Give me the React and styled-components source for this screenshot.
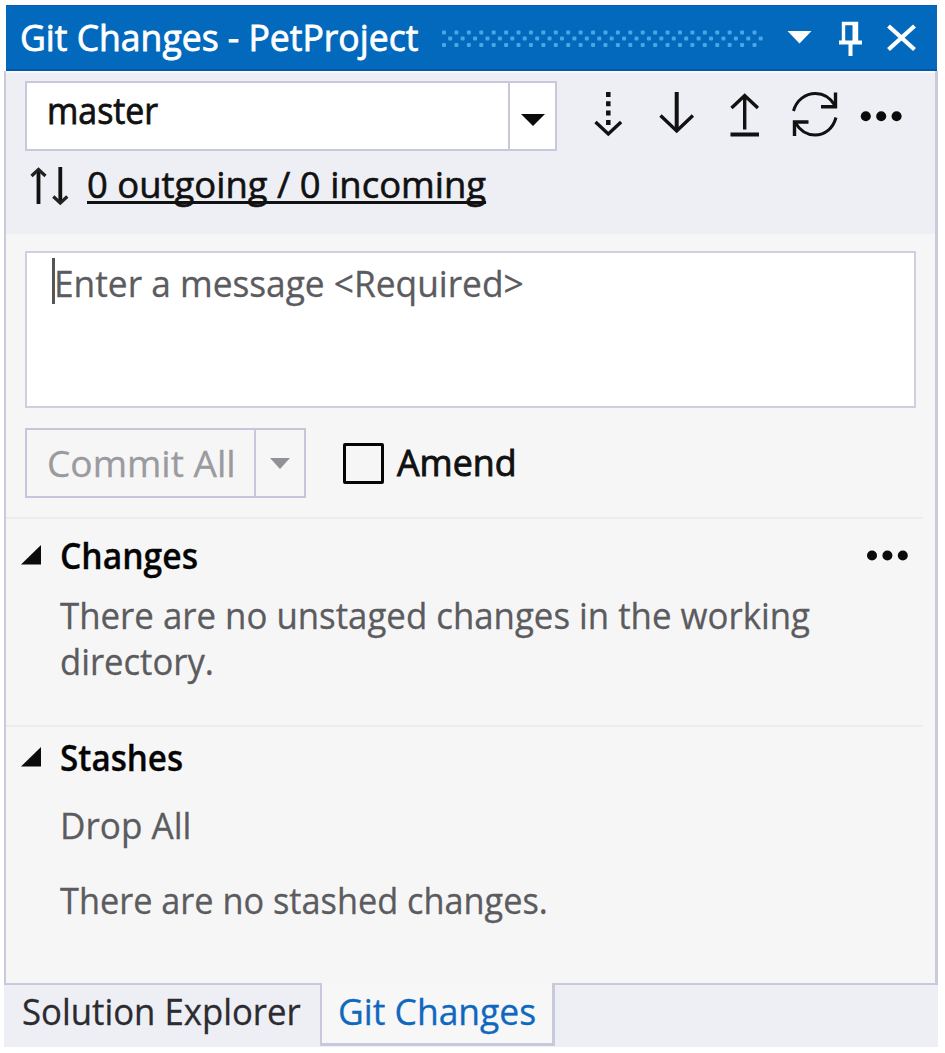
import React from 'react';
import styled, { createGlobalStyle } from 'styled-components';

const GlobalStyle = createGlobalStyle`
  * { box-sizing: border-box; }
  body { margin: 0; background: #fff; font-family: "Open Sans", "Noto Sans", sans-serif; font-size: 36px; color: #111; }
`;

const Page = styled.div`
  width: 945px;
  height: 1053px;
  padding: 5px 7px 7px 4px;
  display: flex;
  flex-direction: column;
`;

const TitleBar = styled.header`
  height: 66px;
  margin: 0 1px 0 2px;
  flex: none;
  display: flex;
  align-items: center;
  padding-left: 14px;
  background: #0369bd;
  border-top: 1px solid #0a5cb4;
  border-bottom: 2px solid #0457b0;
  color: #fff;
`;

const Window = styled.main`
  height: 912px;
  flex: none;
  display: flex;
  flex-direction: column;
  background: #f6f6f6;
  border: solid #cacadb;
  border-width: 0 3px 0 2px;
`;

const Text = styled.span`
  display: block;
  white-space: nowrap;
  line-height: ${(p) => p.$line || 46}px;
  font-size: ${(p) => p.$size || 36}px;
  font-weight: ${(p) => p.$weight || 400};
  color: ${(p) => p.$color || 'inherit'};
  -webkit-text-stroke: ${(p) => p.$thicken || 0.3}px currentColor;
  transform: scaleX(${(p) => p.$squeeze || 0.93});
  transform-origin: left center;
`;

const TitleText = styled.div`
  width: 418px;
  flex: none;
`;

const TitleIcons = styled.svg`
  flex: none;
  display: block;
`;

const Toolbar = styled.section`
  height: 163px;
  flex: none;
  background: #eeeef5;
  border-top: 2px solid #fafafc;
  padding: 8px 0 0 19px;
`;

const ToolRow = styled.div`
  display: flex;
  height: 71px;
`;

const Combo = styled.div`
  width: 532px;
  height: 70px;
  flex: none;
  display: flex;
  background: #fff;
  border: 2px solid #c8c8da;
`;

const ComboValue = styled.div`
  flex: 1;
  padding: 5px 0 0 20px;
`;

const DropButton = styled.div`
  width: ${(p) => p.$width}px;
  display: flex;
  align-items: center;
  justify-content: center;
  padding-top: ${(p) => p.$drop || 0}px;
  border-left: 2px solid #c8c8da;
`;

const SyncRow = styled.div`
  display: flex;
  height: 58px;
  padding-top: 10px;
`;

const SyncIcon = styled.svg`
  width: 62px;
  height: 46px;
  flex: none;
`;

const SyncLink = styled(Text)`
  text-decoration: underline;
  text-decoration-skip-ink: none;
  text-decoration-thickness: 3px;
  text-underline-offset: 3px;
`;

const CommitArea = styled.section`
  height: 283px;
  flex: none;
  padding: 17px 0 0 19px;
`;

const Message = styled.div`
  width: 891px;
  height: 157px;
  display: flex;
  align-items: flex-start;
  background: #fff;
  border: 2px solid #cfcfdf;
  padding: 5px 0 0 25px;
`;

const Caret = styled.i`
  width: 3px;
  height: 46px;
  margin-right: -1px;
  background: #555;
`;

const CommitRow = styled.div`
  display: flex;
  align-items: center;
  margin-top: 20px;
`;

const SplitButton = styled.div`
  width: 281px;
  height: 70px;
  display: flex;
  border: 2px solid #c6c6da;
`;

const SplitLabel = styled.div`
  flex: 1;
  padding: 11px 0 0 20px;
`;

const Checkbox = styled.div`
  width: 41px;
  height: 41px;
  margin: 0 13px 0 37px;
  border: 3px solid #050505;
  border-radius: 2px;
  background: #f6f6f6;
`;

const Section = styled.section`
  height: ${(p) => p.$height}px;
  margin-right: 12px;
  border-top: 2px solid #ececf1;
  padding-left: 15px;
`;

const SectionHead = styled.div`
  display: flex;
  height: 46px;
  margin-top: ${(p) => p.$top}px;
`;

const Expander = styled.svg`
  width: 39px;
  height: 46px;
  flex: none;
`;

const SectionTitle = styled.div`
  flex: 1;
  color: #050505;
`;

const Line = styled.div`
  margin: ${(p) => p.$gap}px 0 0 39px;
`;

const Tabs = styled.nav`
  height: 64px;
  flex: none;
  display: flex;
  background: #eeeef5;
`;

const Tab = styled.div`
  width: ${(p) => p.$width}px;
  height: ${(p) => (p.$active ? 63 : 64)}px;
  padding: ${(p) => (p.$active ? '6px 0 0 16px' : '4px 0 0 18px')};
  background: ${(p) => (p.$active ? '#f7f7f8' : 'transparent')};
  border: solid #c9c9dd;
  border-width: ${(p) => (p.$active ? '0 3px 3px 2px' : '2px 0 0 0')};
`;

const TabFiller = styled.div`
  flex: 1;
  border-top: 2px solid #c9c9dd;
`;

function TitleGrip() {
  const columns = Array.from({ length: 26 }, (_, i) => 6 + i * 12.42);
  return (
    <TitleIcons width="490" height="64" viewBox="438 6 490 64">
      <g fill="#4ba6e4">
        {columns.map((x) => (
          <g key={x}>
            <rect x={436 + x} y="30.5" width="4" height="4" rx="1" />
            <rect x={442.2 + x} y="36.5" width="4" height="4" rx="1" />
            <rect x={436 + x} y="43" width="4" height="4" rx="1" />
          </g>
        ))}
      </g>
      <path d="M787.5 31h24L799.5 43.500z" fill="#fff" />
      <g fill="none" stroke="#fff">
        <path d="M843.500 42V23.500h13V42" strokeWidth="3.400" />
        <path d="M855 24v18" strokeWidth="5" />
        <path d="M839 42.500h23M850.500 43v13" strokeWidth="4" />
        <path d="M888.500 26l26 23.500M914.500 26l-26 23.500" strokeWidth="4.300" />
      </g>
    </TitleIcons>
  );
}

function GitActions() {
  return (
    <svg width="370" height="70" viewBox="557 81 370 70">
      <g fill="none" stroke="#111" strokeWidth="3.400">
        <path d="M608.300 92v36" strokeDasharray="5 4.300" strokeWidth="4.500" />
        <path d="M595.500 122l12.800 12 12.800-12" />
        <path d="M676.700 92v39" strokeWidth="4" />
        <path d="M660.500 115.500l16.200 15.500 16.200-15.500" />
        <path d="M744.700 95v34.500M731.500 108l13.200-12.500 13.200 12.500" />
        <path d="M730.500 134.500h28.500" strokeWidth="4" />
        <path d="M793.500 111c3-11 12-17.500 22-17.500 8 0 15 4.500 19.500 12M836 117.500c-3 11-11 17.500-21 17.500-8 0-15-4.500-19.500-12" strokeWidth="3" />
        <path d="M835.500 92.500v14.300h-14.500M794.500 136v-14h14" />
      </g>
      <g fill="#0a0a0a">
        <circle cx="865.800" cy="116.200" r="5" />
        <circle cx="881.200" cy="116.200" r="5" />
        <circle cx="896.600" cy="116.200" r="5" />
      </g>
    </svg>
  );
}

function Twisty() {
  return (
    <Expander viewBox="21 0 39 46">
      <path d="M21 31.500L41 12v19.500z" fill="#0b0b0b" />
    </Expander>
  );
}

export default function App() {
  return (
    <>
      <GlobalStyle />
      <Page>
        <TitleBar>
          <TitleText><Text $squeeze={0.987} $thicken={0.8}>Git Changes - PetProject</Text></TitleText>
          <TitleGrip />
        </TitleBar>
        <Window>
          <Toolbar>
            <ToolRow>
              <Combo>
                <ComboValue><Text $squeeze={0.94} $thicken={0.8}>master</Text></ComboValue>
                <DropButton $width={47} $drop={4}>
                  <svg width="24" height="16"><path d="M0 4h24L12 16z" fill="#0b0b0b" /></svg>
                </DropButton>
              </Combo>
              <GitActions />
            </ToolRow>
            <SyncRow>
              <SyncIcon viewBox="25 163 62 46">
                <path d="M38.500 205v-34M60.300 168v35" fill="none" stroke="#111" strokeWidth="3.800" />
                <path d="M31.500 177l7-6.500 7 6.500M53.300 197.500l7 6.500 7-6.500" fill="none" stroke="#222" strokeWidth="3.200" />
              </SyncIcon>
              <SyncLink $squeeze={1.012} $thicken={0.6}>0 outgoing / 0 incoming</SyncLink>
            </SyncRow>
          </Toolbar>
          <CommitArea>
            <Message>
              <Caret />
              <Text $squeeze={0.98} $line={52} $color="#5b5b60">Enter a message &lt;Required&gt;</Text>
            </Message>
            <CommitRow>
              <SplitButton>
                <SplitLabel><Text $squeeze={1.03} $color="#9a9a9f">Commit All</Text></SplitLabel>
                <DropButton $width={50} $drop={2}>
                  <svg width="20" height="12"><path d="M0 0h20L10 11z" fill="#929296" /></svg>
                </DropButton>
              </SplitButton>
              <Checkbox />
              <Text $squeeze={0.993} $line={48} $thicken={0.9}>Amend</Text>
            </CommitRow>
          </CommitArea>
          <Section $height={208}>
            <SectionHead $top={14}>
              <Twisty />
              <SectionTitle><Text $squeeze={0.935} $weight={600}>Changes</Text></SectionTitle>
              <svg width="60" height="46" viewBox="863 533 60 46">
                <g fill="#0a0a0a">
                  <circle cx="872" cy="555.500" r="5" />
                  <circle cx="887.400" cy="555.500" r="5" />
                  <circle cx="902.800" cy="555.500" r="5" />
                </g>
              </svg>
            </SectionHead>
            <Line $gap={14}>
              <Text $squeeze={0.967} $color="#5b5b60">There are no unstaged changes in the working</Text>
              <Text $squeeze={0.962} $color="#5b5b60">directory.</Text>
            </Line>
          </Section>
          <Section $height={258}>
            <SectionHead $top={8}>
              <Twisty />
              <SectionTitle><Text $squeeze={0.922} $weight={600}>Stashes</Text></SectionTitle>
            </SectionHead>
            <Line $gap={22}><Text $squeeze={0.975} $color="#5b5b60">Drop All</Text></Line>
            <Line $gap={29}><Text $squeeze={0.952} $color="#5b5b60">There are no stashed changes.</Text></Line>
          </Section>
        </Window>
        <Tabs>
          <Tab $width={316}><Text $squeeze={0.965} $color="#2b2b30">Solution Explorer</Text></Tab>
          <Tab $width={235} $active><Text $squeeze={0.985} $color="#0f68be">Git Changes</Text></Tab>
          <TabFiller />
        </Tabs>
      </Page>
    </>
  );
}
